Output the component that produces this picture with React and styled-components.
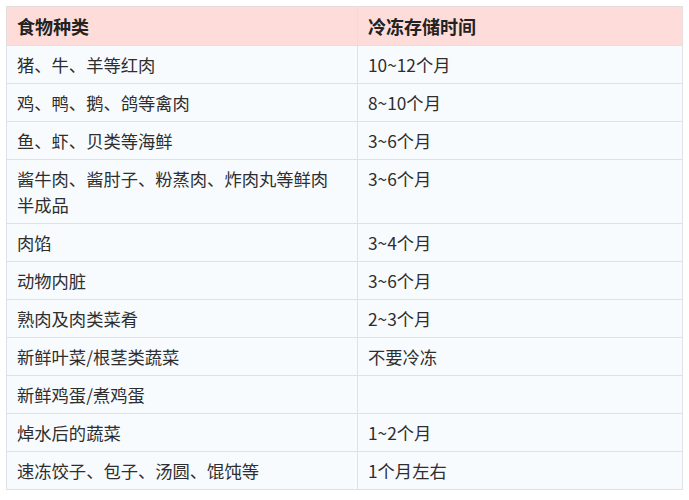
import React from "react";
import styled, { createGlobalStyle } from "styled-components";

const GlobalStyle = createGlobalStyle`
  html, body {
    margin: 0;
    padding: 0;
    background: #ffffff;
  }
  body {
    font-family: "Noto Sans CJK SC", "Noto Sans", sans-serif;
  }
`;

const rows = [
  ["猪、牛、羊等红肉", "10~12个月"],
  ["鸡、鸭、鹅、鸽等禽肉", "8~10个月"],
  ["鱼、虾、贝类等海鲜", "3~6个月"],
  ["酱牛肉、酱肘子、粉蒸肉、炸肉丸等鲜肉半成品", "3~6个月"],
  ["肉馅", "3~4个月"],
  ["动物内脏", "3~6个月"],
  ["熟肉及肉类菜肴", "2~3个月"],
  ["新鲜叶菜/根茎类蔬菜", "不要冷冻"],
  ["新鲜鸡蛋/煮鸡蛋", ""],
  ["焯水后的蔬菜", "1~2个月"],
  ["速冻饺子、包子、汤圆、馄饨等", "1个月左右"],
];

const Page = styled.div`
  padding: 6px 6px 0 6px;
`;

const Table = styled.table`
  width: 677px;
  border-collapse: collapse;
  table-layout: fixed;
  font-size: 17.3px;
  color: #2e2e2e;
`;

const HeadCell = styled.th`
  background: #fddcda;
  border: 1px solid #e6dede;
  text-align: left;
  font-size: 18px;
  font-weight: 700;
  color: #222;
  padding: 6px 10px 6px 10px;
  line-height: 26px;
  width: ${(p) => p.$w || "auto"};
`;

const Cell = styled.td`
  background: #f8fbfe;
  border: 1px solid #dde2e8;
  padding: 6px 24px 5px 10px;
  line-height: 26px;
  vertical-align: top;
  word-break: break-all;
`;

export default function App() {
  return (
    <Page>
      <GlobalStyle />
      <Table>
        <thead>
          <tr>
            <HeadCell $w="330px">食物种类</HeadCell>
            <HeadCell>冷冻存储时间</HeadCell>
          </tr>
        </thead>
        <tbody>
          {rows.map(([food, time], i) => (
            <tr key={i}>
              <Cell>{food}</Cell>
              <Cell>{time}</Cell>
            </tr>
          ))}
        </tbody>
      </Table>
    </Page>
  );
}
